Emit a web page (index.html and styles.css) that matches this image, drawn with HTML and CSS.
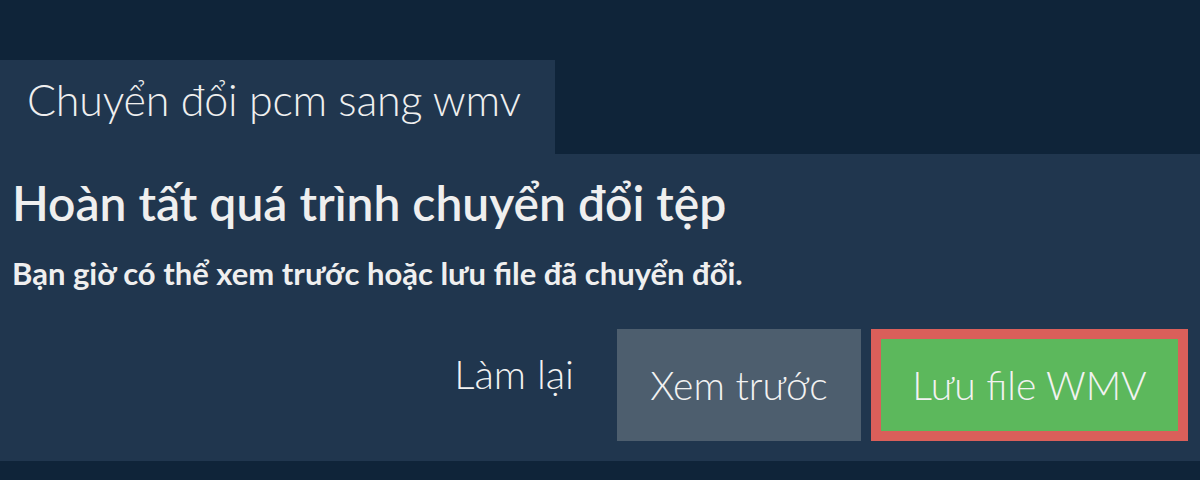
FILE: index.html
```html
<!DOCTYPE html>
<html lang="vi">
<head>
    <meta charset="UTF-8">
    <meta name="viewport" content="width=device-width, initial-scale=1.0">
    <title>Chuyển đổi pcm sang wmv</title>
    <link rel="stylesheet" href="styles.css">
</head>
<body>

    <div class="tab">Chuyển đổi pcm sang wmv</div>

    <div class="panel">
        <h2>Hoàn tất quá trình chuyển đổi tệp</h2>
        <p>Bạn giờ có thể xem trước hoặc lưu file đã chuyển đổi.</p>

        <div class="actions">
            <button class="btn btn-link">Làm lại</button>
            <button class="btn btn-grey">Xem trước</button>
            <div class="highlight">
                <button class="btn btn-green">Lưu file WMV</button>
            </div>
        </div>
    </div>

</body>
</html>
```

FILE: styles.css
```css
body {
    margin: 0;
    padding-top: 60px;
    background: #0f2439;
    font-family: Lato, "Noto Sans", sans-serif;
    color: #efefef;
}
.tab {
    display: inline-block;
    height: 94px;
    line-height: 79px;
    padding: 0 34px 0 27px;
    background: #20364e;
    font-size: 43px;
    font-weight: 300;
    letter-spacing: -0.2px;
}
.panel {
    background: #20364e;
    padding: 20px 12px 20px 12px;
}
h2 {
    margin: 0;
    font-size: 48px;
    font-weight: 600;
    line-height: 58px;
}
p {
    margin: 23px 0 0;
    font-size: 31px;
    font-weight: 700;
    line-height: 36px;
}
.actions {
    display: flex;
    justify-content: flex-end;
    align-items: stretch;
    gap: 10px;
    margin-top: 38px;
}
.btn {
    font-family: inherit;
    font-size: 39px;
    font-weight: 300;
    color: #f2f2f2;
    border: none;
    padding: 0;
    cursor: pointer;
}
.btn-link {
    background: transparent;
    font-size: 40px;
    padding: 0 33px 22px;
}
.btn-grey {
    background: #4d5e6e;
    width: 244px;
    height: 112px;
}
.highlight {
    border: 10px solid #da5f5a;
    display: flex;
}
.btn-green {
    background: #5cb85c;
    width: 297px;
    height: 92px;
}
```
